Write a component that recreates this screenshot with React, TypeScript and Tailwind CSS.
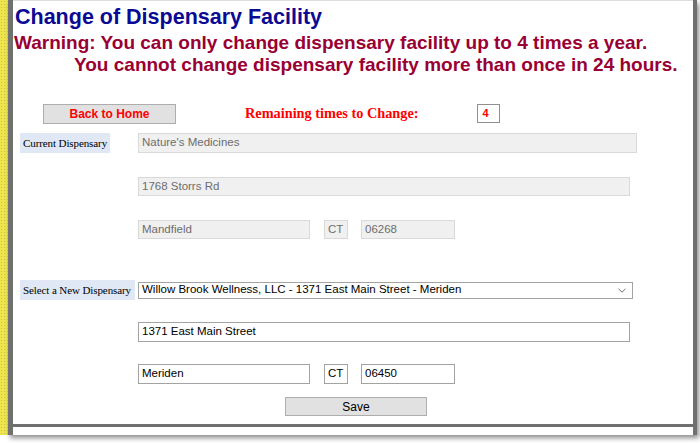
const sans = { fontFamily: '"Liberation Sans", Arial, sans-serif' };

const Field = ({
  value,
  width,
  height = "h-[19px]",
  readOnly = false,
}: {
  value: string;
  width: string;
  height?: string;
  readOnly?: boolean;
}) => (
  <div
    className={`${width} ${height} flex items-center px-[3px] text-[11.5px] leading-none font-['Liberation_Sans',Arial,sans-serif] border ${
      readOnly
        ? "bg-[#f0f0f0] border-[#d9d9d9] text-[#6d6d6d]"
        : "bg-white border-[#a3a3a3] text-black"
    }`}
  >
    {value}
  </div>
);

const Label = ({ text, width }: { text: string; width: string }) => (
  <div
    className={`${width} h-[20px] ml-[7px] flex items-center pl-[3px] bg-[#dfe8f4] text-[11px] text-black font-['Liberation_Serif','Times_New_Roman',serif] whitespace-nowrap tracking-[-0.1px]`}
  >
    {text}
  </div>
);

export default function App() {
  return (
    <div className="w-[700px] h-[443px] bg-white overflow-hidden flex" style={sans}>
      {/* yellow page edge */}
      <div className="w-[8px] h-[435px] shrink-0 bg-[#eee64c] bg-[image:radial-gradient(#cbc35a_0.7px,transparent_0.8px)] bg-[size:3px_3px]" />

      {/* window */}
      <div className="w-[689px] h-[435px] shrink-0 flex flex-col bg-white border-l-[5px] border-r-[4px] border-[#707070] shadow-[2px_3px_5px_rgba(0,0,0,0.45)]">
        <div className="h-[424px] flex flex-col border-t border-[#dedede]">
          <h1 className="pt-[3px] pl-[2px] text-[21.5px] leading-[26px] font-bold text-[#0a0a94]">
            Change of Dispensary Facility
          </h1>
          <div className="mt-[2px] pl-[1px] text-[19px] leading-[22px] font-bold text-[#990033] whitespace-nowrap">
            <div>Warning: You can only change dispensary facility up to 4 times a year.</div>
            <div className="pl-[60px]">You cannot change dispensary facility more than once in 24 hours.</div>
          </div>

          {/* back / remaining */}
          <div className="mt-[28px] flex items-center h-[20px]">
            <button className="ml-[30px] w-[133px] h-[20px] bg-[#e1e1e1] border border-[#adadad] text-[12px] font-bold text-[#ff0000]">
              Back to Home
            </button>
            <span className="ml-[69px] text-[14.3px] font-bold text-[#ff0000] font-['Liberation_Serif','Times_New_Roman',serif] whitespace-nowrap">
              Remaining times to Change:
            </span>
            <div className="ml-[58px] w-[23px] h-[19px] -mt-[1px] bg-white border border-[#8f8f8f] flex items-center pl-[5px] text-[11px] font-bold text-[#ff0000]">
              4
            </div>
          </div>

          {/* current dispensary */}
          <div className="mt-[9px] flex items-center">
            <Label text="Current Dispensary" width="w-[90px]" />
            <div className="ml-[28px]">
              <Field value="Nature's Medicines" width="w-[499px]" height="h-[20px]" readOnly />
            </div>
          </div>
          <div className="mt-[24px] ml-[125px]">
            <Field value="1768 Storrs Rd" width="w-[492px]" readOnly />
          </div>
          <div className="mt-[24px] ml-[125px] flex">
            <Field value="Mandfield" width="w-[172px]" readOnly />
            <div className="ml-[14px]">
              <Field value="CT" width="w-[24px]" readOnly />
            </div>
            <div className="ml-[13px]">
              <Field value="06268" width="w-[94px]" readOnly />
            </div>
          </div>

          {/* new dispensary */}
          <div className="mt-[41px] flex items-center">
            <Label text="Select a New Dispensary" width="w-[115px]" />
            <div className="ml-[3px] w-[495px] h-[17px] bg-white border border-[#a3a3a3] flex items-center justify-between pl-[3px] pr-[6px] text-[11.5px] text-black">
              <span>Willow Brook Wellness, LLC - 1371 East Main Street - Meriden</span>
              <svg width="8" height="5" viewBox="0 0 8 5" fill="none">
                <path d="M0.5 0.8L4 4.2L7.5 0.8" stroke="#6b6b6b" strokeWidth="1" />
              </svg>
            </div>
          </div>
          <div className="mt-[22px] ml-[125px]">
            <Field value="1371 East Main Street" width="w-[492px]" height="h-[20px]" />
          </div>
          <div className="mt-[22px] ml-[125px] flex">
            <Field value="Meriden" width="w-[172px]" height="h-[20px]" />
            <div className="ml-[14px]">
              <Field value="CT" width="w-[24px]" height="h-[20px]" />
            </div>
            <div className="ml-[13px]">
              <Field value="06450" width="w-[94px]" height="h-[20px]" />
            </div>
          </div>

          <button className="mt-[13px] ml-[272px] w-[142px] h-[19px] bg-[#e1e1e1] border border-[#adadad] text-[12px] text-black">
            Save
          </button>
        </div>
        <div className="h-[3px] bg-[#6f6f6f]" />
        <div className="flex-1 bg-white" />
      </div>
    </div>
  );
}
